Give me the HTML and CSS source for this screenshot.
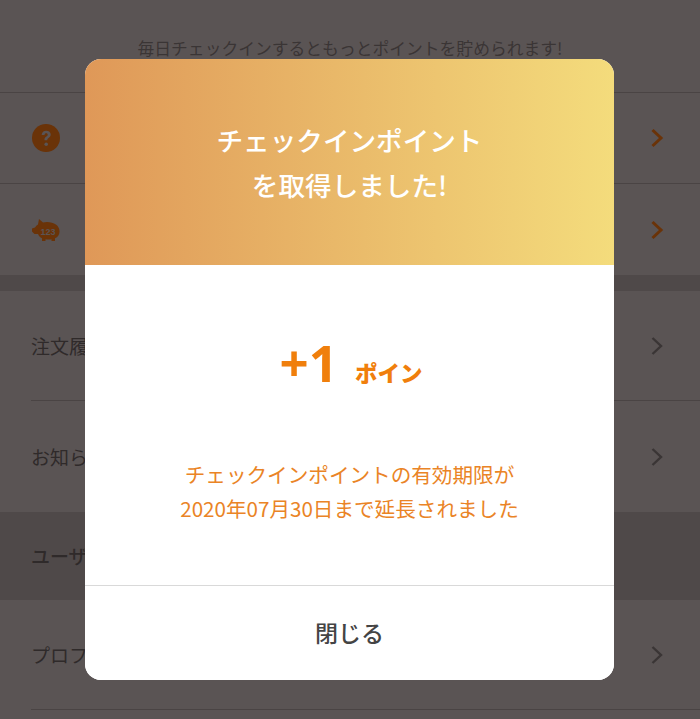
FILE: index.html
```html
<!DOCTYPE html>
<html lang="ja">
<head>
<meta charset="utf-8">
<title>チェックインポイント</title>
<link rel="stylesheet" href="styles.css">
</head>
<body>
<main class="page">
  <p class="intro">毎日チェックインするともっとポイントを貯められます!</p>
  <div class="row row-top">
    <svg class="icon" viewBox="0 0 28 28" width="28" height="28"><circle cx="14" cy="14" r="14" fill="#6a3308"/><path d="M9.600 11c.2-2.700 2.100-4.200 4.600-4.200 2.600 0 4.500 1.500 4.500 3.800 0 1.700-.9 2.600-2.100 3.400-1 .7-1.300 1.100-1.300 2.200h-2.800c-.1-1.800.4-2.700 1.700-3.600 1-.7 1.500-1.100 1.500-1.900 0-.8-.6-1.400-1.500-1.400-1 0-1.600.6-1.700 1.700z" fill="#5a5454"/><circle cx="14.200" cy="20.300" r="1.800" fill="#5a5454"/></svg>
    <svg class="chevron chevron-brown" viewBox="0 0 14 20" width="14" height="20"><path d="M2.500 2l8.500 8-8.500 8" fill="none" stroke="currentColor" stroke-width="3"/></svg>
  </div>
  <div class="row row-top row-last">
    <svg class="icon" viewBox="0 0 28 24" width="28" height="24"><path d="M7 1l4 3.500c1-.3 2.500-.5 4-.5 7 0 12.500 3.500 12.500 9.500 0 3.500-1.700 5.500-4.500 6.800V23h-3.500v-1.700c-1.500.3-4 .3-6 0V23H10v-2.800c-2-1-3.300-2.300-4-4.200H2.500L0 13.500v-3L3 9.500c.8-1.200 1.800-2.300 3-3z" fill="#6a3308"/><text x="16" y="16.500" class="pig-text">123</text></svg>
    <svg class="chevron chevron-brown" viewBox="0 0 14 20" width="14" height="20"><path d="M2.500 2l8.500 8-8.500 8" fill="none" stroke="currentColor" stroke-width="3"/></svg>
  </div>
  <div class="band band-thin"></div>
  <div class="row row-inset row-a"><span class="label">注文履歴</span><svg class="chevron" viewBox="0 0 14 20" width="14" height="20"><path d="M2.500 2l8.500 8-8.500 8" fill="none" stroke="currentColor" stroke-width="2.400"/></svg></div>
  <div class="row row-plain row-b"><span class="label">お知らせ</span><svg class="chevron" viewBox="0 0 14 20" width="14" height="20"><path d="M2.500 2l8.500 8-8.500 8" fill="none" stroke="currentColor" stroke-width="2.400"/></svg></div>
  <div class="band band-head"><span class="label">ユーザー情報</span></div>
  <div class="row row-inset row-c"><span class="label">プロフィール</span><svg class="chevron" viewBox="0 0 14 20" width="14" height="20"><path d="M2.500 2l8.500 8-8.500 8" fill="none" stroke="currentColor" stroke-width="2.400"/></svg></div>
</main>

<section class="modal">
  <header class="modal-head">
    <h1 class="modal-title">チェックインポイント<br>を取得しました!</h1>
  </header>
  <div class="modal-body">
    <div class="points"><span class="points-num">+1</span><span class="points-unit">ポイン</span></div>
    <p class="note">チェックインポイントの有効期限が<br>2020年07月30日まで延長されました</p>
  </div>
  <button class="close" type="button">閉じる</button>
</section>
</body>
</html>
```

FILE: styles.css
```css
* { box-sizing: border-box; }
html, body { margin: 0; height: 100%; }
body {
  background: #5a5454;
  font-family: "Noto Sans CJK JP", "Noto Sans", sans-serif;
  color: #2f2a2a;
  overflow: hidden;
  position: relative;
}
.page { display: flex; flex-direction: column; }
.intro {
  margin: 0;
  height: 93px;
  padding-top: 36px;
  font-size: 16.800px;
  line-height: 24px;
  text-align: center;
  color: #3a3535;
  border-bottom: 1px solid #4a4444;
}
.row {
  display: flex;
  align-items: center;
  justify-content: space-between;
  padding: 0 36px 0 32px;
}
.row-top { height: 91px; border-bottom: 1px solid #4a4444; }
.row-last { border-bottom: 0; }
.icon { display: block; }
.chevron { color: #3a3535; display: block; }
.chevron-brown { color: #6a3308; }
.band { background: #4f4949; }
.band-thin { height: 16px; }
.label { font-size: 19px; line-height: 28px; color: #2f2a2a; white-space: nowrap; }
.row-inset, .row-plain { position: relative; padding-left: 31px; }
.row-a { height: 110px; border-bottom: 0; }
.row-b { height: 111px; }
.row-inset::after {
  content: "";
  position: absolute;
  left: 31px;
  right: 0;
  bottom: 0;
  height: 1px;
  background: #4a4444;
}
.band-head {
  height: 88px;
  display: flex;
  align-items: center;
  padding-left: 31px;
}
.band-head .label { font-weight: 500; }
.row-c { height: 110px; }
.pig-text {
  font-family: "Liberation Sans", sans-serif;
  font-size: 9px;
  font-weight: 700;
  fill: #5a5454;
  text-anchor: middle;
}
.modal {
  position: absolute;
  left: 85px;
  top: 59px;
  width: 529px;
  height: 621px;
  border-radius: 16px;
  background: #fff;
  overflow: hidden;
  display: flex;
  flex-direction: column;
}
.modal-head {
  height: 206px;
  flex: none;
  background: linear-gradient(90deg, #df9858 0%, #f4dc7c 100%);
  display: flex;
  align-items: center;
  justify-content: center;
}
.modal-title {
  margin: 0;
  font-size: 26.600px;
  font-weight: 500;
  line-height: 45px;
  text-align: center;
  color: #fff;
  padding-bottom: 1px;
}
.modal-body {
  flex: 1;
  display: flex;
  flex-direction: column;
  align-items: center;
  border-bottom: 1px solid #d9d9d9;
}
.points {
  display: flex;
  align-items: baseline;
  gap: 17px;
  margin-top: 64px;
  height: 66px;
  padding-left: 3px;
  color: #f07f0c;
  font-weight: 700;
}
.points-num {
  font-family: "Open Sans", "Noto Sans", sans-serif;
  font-size: 51px;
  line-height: 66px;
  font-weight: 700;
}
.points-unit { font-size: 22.500px; line-height: 66px; font-weight: 900; }
.note {
  margin: 62px 0 0;
  font-size: 20.600px;
  line-height: 34px;
  text-align: center;
  color: #ea8426;
}
.close {
  flex: none;
  height: 94px;
  padding: 0 0 3px;
  border: 0;
  background: #fff;
  font-family: inherit;
  font-size: 23px;
  font-weight: 500;
  color: #444;
}
```
